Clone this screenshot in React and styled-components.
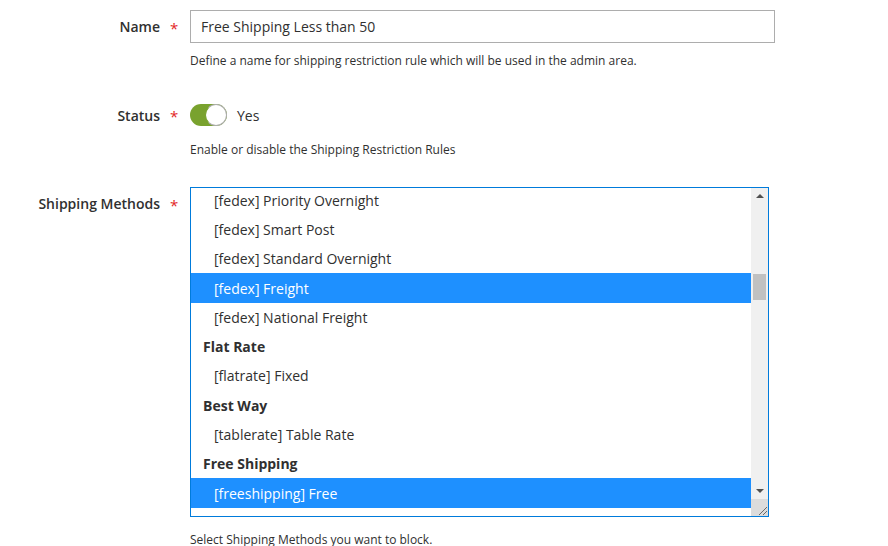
import React from 'react'
import styled, { createGlobalStyle } from 'styled-components'

const GlobalStyle = createGlobalStyle`
  html, body {
    margin: 0;
    background: #fff;
  }
  body {
    font-family: 'Open Sans', 'Noto Sans', Arial, sans-serif;
    color: #303030;
    font-size: 14px;
  }
`

const Form = styled.div`
  padding-top: 10px;
  width: 888px;
  height: 546px;
  overflow: hidden;
`

const Field = styled.div`
  display: grid;
  grid-template-columns: 176px 1fr;
  column-gap: 14px;
  align-items: start;
  margin-bottom: ${p => p.gap || 0}px;
`

const Label = styled.label`
  display: flex;
  justify-content: flex-end;
  align-items: center;
  height: ${p => p.h || 33}px;
  font-weight: 600;
  font-size: 14px;
  color: #303030;
  &::after {
    content: '*';
    color: #e22626;
    font-weight: 400;
    font-size: 15px;
    margin-left: 10px;
    width: 6px;
    position: relative;
    top: 1px;
  }
`

const Control = styled.div`
  display: flex;
  flex-direction: column;
  align-items: flex-start;
`

const Input = styled.input`
  box-sizing: border-box;
  width: 585px;
  height: 33px;
  border: 1px solid #adadad;
  padding: 0 10px;
  font-family: inherit;
  font-size: 14px;
  color: #303030;
  outline: none;
`

const Note = styled.div`
  font-size: 12px;
  line-height: 17px;
  color: #303030;
  margin-top: ${p => p.top || 9}px;
`

const SwitchRow = styled.div`
  display: flex;
  align-items: center;
  height: 22px;
  gap: 10px;
  font-size: 14px;
`

const Switch = styled.span`
  box-sizing: border-box;
  position: relative;
  width: 37px;
  height: 22px;
  border-radius: 11px;
  background: #79a22e;
  &::after {
    content: '';
    position: absolute;
    right: 0;
    top: 0;
    box-sizing: border-box;
    width: 22px;
    height: 22px;
    border-radius: 50%;
    background: #fff;
    border: 1px solid #adadad;
    border-left-color: #79a22e;
  }
`

const Select = styled.div`
  box-sizing: border-box;
  width: 579px;
  height: 330px;
  border: 1px solid #007bdb;
  display: flex;
  overflow: hidden;
`

const Options = styled.ul`
  flex: 1;
  list-style: none;
  margin: -2.5px 0 0;
  padding: 0;
`

const Option = styled.li`
  height: 29.3px;
  display: flex;
  align-items: center;
  padding-left: ${p => (p.group ? 12 : 23)}px;
  font-size: 14px;
  font-weight: ${p => (p.group ? 700 : 400)};
  background: ${p => (p.selected ? '#1e90ff' : 'transparent')};
  color: ${p => (p.selected ? '#fff' : '#303030')};
`

const Scrollbar = styled.div`
  width: 17px;
  background: #f0f0f0;
  display: flex;
  flex-direction: column;
  align-items: center;
`

const Arrow = styled.div`
  width: 0;
  height: 0;
  border-left: 4px solid transparent;
  border-right: 4px solid transparent;
  ${p =>
    p.down
      ? 'border-top: 4px solid #505050; margin-top: 10px;'
      : 'border-bottom: 4px solid #505050; margin-top: 6px;'}
`

const Track = styled.div`
  flex: 1;
  width: 100%;
  display: flex;
  justify-content: center;
  padding-top: 76px;
  box-sizing: border-box;
`

const Thumb = styled.div`
  width: 13px;
  height: 26px;
  background: #c1c1c1;
`

const Corner = styled.div`
  width: 17px;
  height: 17px;
  margin-top: 6px;
  background: #dcdcdc;
  display: flex;
  align-items: flex-end;
  justify-content: flex-end;
`

const options = [
  { text: '[fedex] Priority Overnight' },
  { text: '[fedex] Smart Post' },
  { text: '[fedex] Standard Overnight' },
  { text: '[fedex] Freight', selected: true },
  { text: '[fedex] National Freight' },
  { text: 'Flat Rate', group: true },
  { text: '[flatrate] Fixed' },
  { text: 'Best Way', group: true },
  { text: '[tablerate] Table Rate' },
  { text: 'Free Shipping', group: true },
  { text: '[freeshipping] Free', selected: true },
]

export default function App() {
  return (
    <Form>
      <GlobalStyle />
      <Field gap={35}>
        <Label>Name</Label>
        <Control>
          <Input defaultValue="Free Shipping Less than 50" />
          <Note top={9}>Define a name for shipping restriction rule which will be used in the admin area.</Note>
        </Control>
      </Field>
      <Field gap={29}>
        <Label h={22}>Status</Label>
        <Control>
          <SwitchRow>
            <Switch />
            <span>Yes</span>
          </SwitchRow>
          <Note top={15}>Enable or disable the Shipping Restriction Rules</Note>
        </Control>
      </Field>
      <Field>
        <Label h={33}>Shipping Methods</Label>
        <Control>
          <Select>
            <Options>
              {options.map(o => (
                <Option key={o.text} group={o.group} selected={o.selected}>
                  {o.text}
                </Option>
              ))}
            </Options>
            <Scrollbar>
              <Arrow />
              <Track>
                <Thumb />
              </Track>
              <Arrow down />
              <Corner>
                <svg width="12" height="12" viewBox="0 0 12 12">
                  <path d="M11 3 L3 11 M11 7 L7 11" stroke="#6a6a6a" strokeWidth="1" />
                </svg>
              </Corner>
            </Scrollbar>
          </Select>
          <Note top={14}>Select Shipping Methods you want to block.</Note>
        </Control>
      </Field>
    </Form>
  )
}
